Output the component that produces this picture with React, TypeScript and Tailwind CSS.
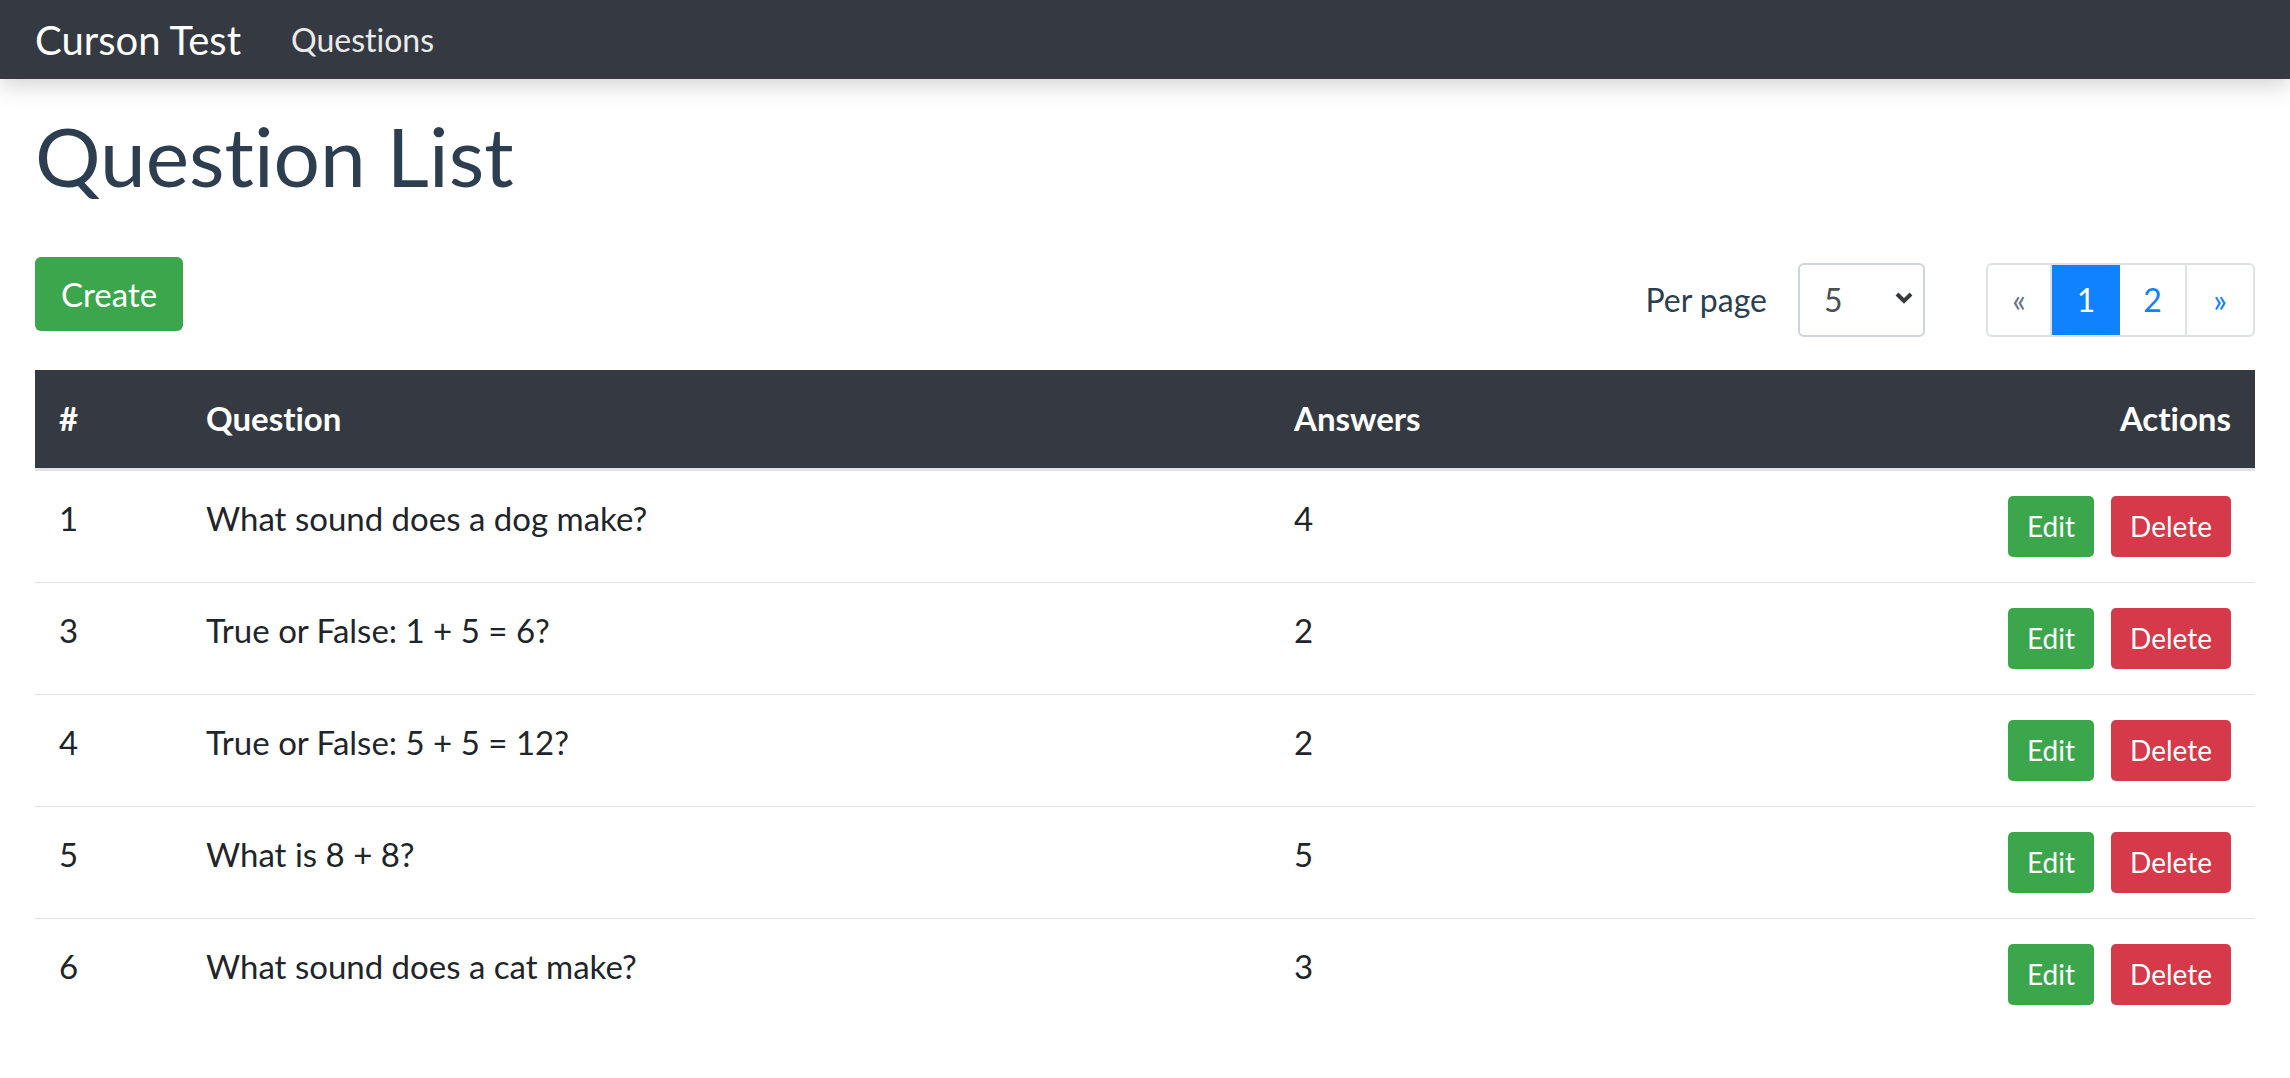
import React from "react";

const rows = [
  { id: 1, text: "What sound does a dog make?", answers: 4 },
  { id: 3, text: "True or False: 1 + 5 = 6?", answers: 2 },
  { id: 4, text: "True or False: 5 + 5 = 12?", answers: 2 },
  { id: 5, text: "What is 8 + 8?", answers: 5 },
  { id: 6, text: "What sound does a cat make?", answers: 3 },
];

export default function App() {
  const [perPage, setPerPage] = React.useState("5");

  return (
    <div
      className="min-h-screen bg-white text-[33px] leading-[1.5] text-[#212529] [font-variant-ligatures:none]"
      style={{ fontFamily: "Lato, 'Noto Sans', sans-serif" }}
    >
      <nav className="relative z-10 flex h-[79px] items-center bg-[#353a42] px-[35px] shadow-[0_6px_22px_rgba(0,0,0,0.18)]">
        <span className="mr-[50px] text-[40px] leading-none text-white">Curson Test</span>
        <a className="text-[32px] leading-none text-white/90">Questions</a>
      </nav>

      <div className="px-[35px]">
        <h1 className="mt-[27px] text-[82px] font-normal leading-[1.2] text-[#2c3e50]">Question List</h1>

        <div className="mt-[53px] flex items-start justify-between">
          <button
            type="button"
            className="h-[74px] rounded-[6px] bg-[#3ba64b] px-[26px] text-[33px] text-white"
          >
            Create
          </button>

          <div className="mt-[6px] flex items-center">
            <span className="mr-[31px] text-[32px] text-[#2c3e50]">Per page</span>
            <div className="relative">
              <select
                value={perPage}
                onChange={(e) => setPerPage(e.target.value)}
                className="h-[74px] w-[127px] appearance-none rounded-[6px] border-2 border-[#ced4da] bg-white pl-[24px] text-[32px] text-[#495057]"
              >
                <option value="5">5</option>
                <option value="10">10</option>
                <option value="20">20</option>
              </select>
              <svg
                className="pointer-events-none absolute right-[12px] top-[28px]"
                width="18"
                height="14"
                viewBox="0 0 18 14"
              >
                <path d="M2 3l7 7 7-7" fill="none" stroke="#343a40" strokeWidth="4" />
              </svg>
            </div>

            <ul className="ml-[61px] flex h-[74px] overflow-hidden rounded-[6px] border-2 border-[#dee2e6] text-[32px]">
              <li className="flex w-[64px] items-center justify-center border-r-2 border-[#dee2e6] text-[#6c757d]">
                «
              </li>
              <li className="flex w-[68px] items-center justify-center bg-[#0f82ff] text-white">1</li>
              <li className="flex w-[67px] items-center justify-center border-r-2 border-[#dee2e6] text-[#0f82ff]">
                2
              </li>
              <li className="flex w-[66px] items-center justify-center text-[#0f82ff]">»</li>
            </ul>
          </div>
        </div>

        <table className="mt-[33px] w-full table-fixed border-collapse text-left">
          <colgroup>
            <col className="w-[147px]" />
            <col className="w-[1088px]" />
            <col className="w-[500px]" />
            <col />
          </colgroup>
          <thead>
            <tr className="bg-[#353a42] text-white">
              <th className="border-b-[3px] border-[#dee2e6] px-[24px] py-[24px] font-bold">#</th>
              <th className="border-b-[3px] border-[#dee2e6] px-[24px] py-[24px] font-bold">Question</th>
              <th className="border-b-[3px] border-[#dee2e6] px-[24px] py-[24px] font-bold">Answers</th>
              <th className="border-b-[3px] border-[#dee2e6] px-[24px] py-[24px] text-right font-bold">Actions</th>
            </tr>
          </thead>
          <tbody>
            {rows.map((r, i) => (
              <tr key={r.id}>
                <td className={`${i ? "border-t" : ""} border-[#dee2e6] px-[24px] py-[23px] align-top`}>{r.id}</td>
                <td className={`${i ? "border-t" : ""} border-[#dee2e6] px-[24px] py-[23px] align-top`}>{r.text}</td>
                <td className={`${i ? "border-t" : ""} border-[#dee2e6] px-[24px] py-[23px] align-top`}>{r.answers}</td>
                <td className={`${i ? "border-t" : ""} border-[#dee2e6] px-[24px] py-[25px] align-top`}>
                  <div className="flex justify-end gap-[17px]">
                    <button
                      type="button"
                      className="h-[61px] rounded-[5px] bg-[#3ba64b] px-[19px] text-[28px] text-white"
                    >
                      Edit
                    </button>
                    <button
                      type="button"
                      className="h-[61px] rounded-[5px] bg-[#d6394a] px-[19px] text-[28px] text-white"
                    >
                      Delete
                    </button>
                  </div>
                </td>
              </tr>
            ))}
          </tbody>
        </table>
      </div>
    </div>
  );
}
